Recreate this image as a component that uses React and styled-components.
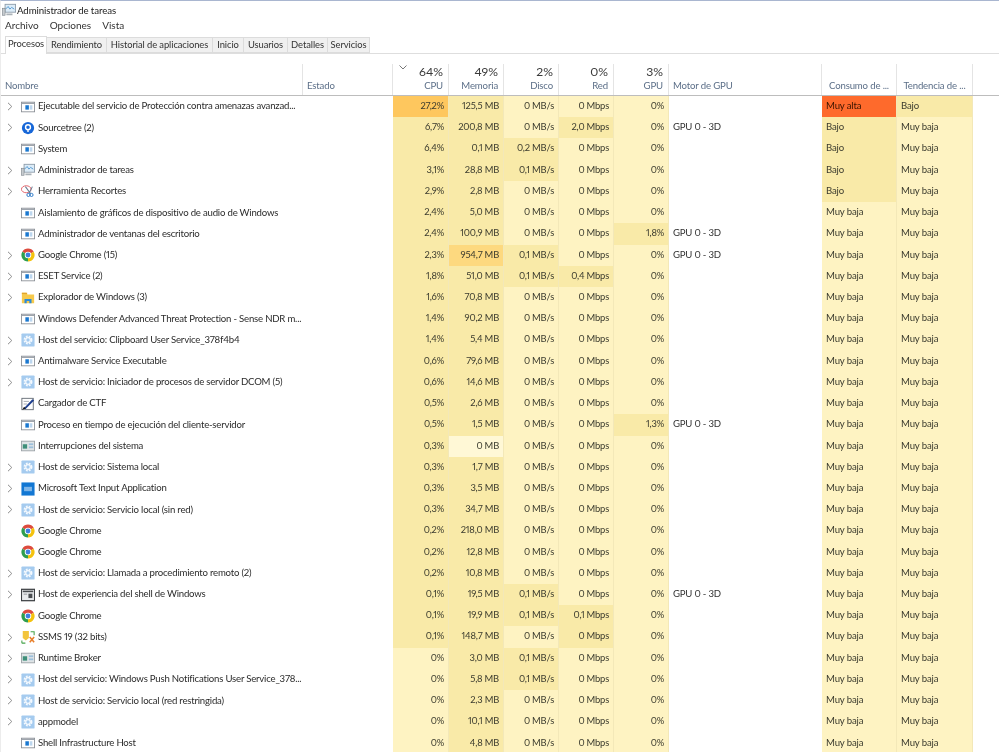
import React from "react";
import styled, { createGlobalStyle } from "styled-components";

const Global = createGlobalStyle`
  html, body { margin: 0; padding: 0; background: #fff; }
  body { width: 999px; height: 752px; overflow: hidden; font-family: Lato, "Liberation Sans", sans-serif; font-variant-numeric: proportional-nums; }
`;

const COLS = "302px 90px 56px 55px 55px 55px 55px 153px 75px 76px";
const LEVELS = {
  0: "#fef3c2",
  1: "#f9eaa8",
  2: "#fdd97f",
  3: "#fec75e",
  f: "#fff8d6",
  o: "#fe6a2c",
};

const Window = styled.div`
  width: 999px;
  height: 752px;
  overflow: hidden;
  box-sizing: border-box;
  border-top: 1px solid #a9b6d0;
  border-left: 1px solid #ececec;
  filter: blur(0.35px);
  color: #2b2b2b;
`;
const TitleBar = styled.div`
  display: flex;
  align-items: center;
  height: 18px;
  padding-left: 1px;
  font-size: 9.7px;
  letter-spacing: -0.1px;
  color: #222;
`;
const TitleIcon = styled.span`
  display: flex;
  width: 15px;
  & svg { margin: 0; }
`;
const MenuBar = styled.div`
  display: flex;
  gap: 11px;
  height: 14px;
  padding-left: 4px;
  font-size: 10px;
  line-height: 13px;
  color: #333;
`;
const TabStrip = styled.div`
  display: flex;
  align-items: flex-end;
  height: 20px;
  padding-left: 4px;
  border-bottom: 1px solid #dedede;
`;
const Tab = styled.div`
  box-sizing: border-box;
  width: ${(p) => p.$w}px;
  height: ${(p) => (p.$active ? 18 : 16)}px;
  margin-bottom: ${(p) => (p.$active ? -1 : 0)}px;
  background: ${(p) => (p.$active ? "#fff" : "#f0f0f0")};
  border: 1px solid #dcdcdc;
  border-bottom: ${(p) => (p.$active ? "none" : "1px solid #dcdcdc")};
  border-left: ${(p) => (p.$first ? "1px solid #dcdcdc" : "none")};
  font-size: 9.4px;
  letter-spacing: -0.08px;
  line-height: 14px;
  text-align: center;
  color: #333;
  white-space: nowrap;
`;
const Head = styled.div`
  display: grid;
  grid-template-columns: ${COLS};
  height: 42px;
  padding-top: 10px;
  box-sizing: border-box;
  border-bottom: 1px solid #bdbdbd;
`;
const HeadCell = styled.div`
  position: relative;
  display: flex;
  flex-direction: column;
  justify-content: flex-end;
  align-items: ${(p) => (p.$right ? "flex-end" : p.$center ? "center" : "flex-start")};
  padding: 0 ${(p) => (p.$right ? 5 : 0)}px 2px ${(p) => (p.$right || p.$center ? 0 : 4)}px;
  border-right: 1px solid #e4e4e4;
  box-sizing: border-box;
`;
const Percent = styled.div`
  font-size: 12.2px;
  line-height: 15px;
  color: #3a3a3a;
`;
const Label = styled.div`
  font-size: 9.6px;
  letter-spacing: -0.15px;
  line-height: 14px;
  color: #5c6f88;
  white-space: nowrap;
`;
const Sort = styled.svg`
  position: absolute;
  left: 6px;
  top: 1px;
  width: 8px;
  height: 5px;
`;
const Body = styled.div`
  display: flex;
  flex-direction: column;
`;
const Row = styled.div`
  display: grid;
  grid-template-columns: ${COLS};
  height: 21.23px;
  font-size: 9.6px;
  letter-spacing: -0.2px;
  line-height: 20.4px;
`;
const NameCell = styled.div`
  display: flex;
  align-items: center;
  overflow: hidden;
  white-space: nowrap;
`;
const Chevron = styled.svg`
  flex: none;
  width: 6px;
  height: 9px;
  margin-left: 6px;
  visibility: ${(p) => (p.$show ? "visible" : "hidden")};
`;
const IconSlot = styled.svg`
  flex: none;
  width: 14px;
  height: 14px;
  margin: 0 3px 0 8px;
`;
const Blank = styled.div``;
const DataCell = styled.div`
  background: ${(p) => LEVELS[p.$level]};
  border-right: 1px solid #f3e8b8;
  padding: 0 ${(p) => (p.$left ? 0 : 4)}px 0 ${(p) => (p.$left ? 4 : 0)}px;
  text-align: ${(p) => (p.$left ? "left" : "right")};
  font-size: ${(p) => (p.$left ? 9.6 : 9.4)}px;
  letter-spacing: ${(p) => (p.$left ? "-0.15px" : "-0.2px")};
  color: ${(p) => (p.$level === "o" ? "#3a1400" : "#3b3b2e")};
  white-space: nowrap;
`;
const EngineCell = styled.div`
  padding-left: 4px;
  color: #333;
`;

const Service = () => (
  <IconSlot viewBox="0 0 16 16">
    <rect x="0.5" y="2.5" width="15" height="11" fill="#fff" stroke="#8a8f96" />
    <rect x="1" y="3" width="14" height="1.5" fill="#9aa0a8" />
    <rect x="5" y="6" width="4" height="5" fill="#1b78d0" />
    <rect x="10" y="6" width="3" height="5" fill="#bcd6ee" />
  </IconSlot>
);
const Sourcetree = () => (
  <IconSlot viewBox="0 0 16 16">
    <circle cx="8" cy="8" r="7" fill="#1767d8" />
    <circle cx="8" cy="7" r="2.8" fill="none" stroke="#fff" strokeWidth="1.6" />
    <path d="M8 10v2.5" stroke="#fff" strokeWidth="1.6" />
  </IconSlot>
);
const TaskMgr = () => (
  <IconSlot viewBox="0 0 16 16">
    <rect x="3.5" y="1.5" width="12" height="9" fill="#dcecf8" stroke="#8b9aa8" />
    <path d="M4 7l3-3 2 3 2-2 3 2" fill="none" stroke="#4a93cf" />
    <rect x="0.5" y="6" width="3" height="8" fill="#c7ccd0" stroke="#7d858c" strokeWidth="0.7" />
    <rect x="5" y="12" width="7" height="2" fill="#aab2b8" />
  </IconSlot>
);
const Snip = () => (
  <IconSlot viewBox="0 0 16 16">
    <ellipse cx="6" cy="6" rx="5.5" ry="4" fill="none" stroke="#e0525a" strokeWidth="1" />
    <path d="M5 3l6 8M13 3l-4 8" stroke="#6b7e92" strokeWidth="1.2" />
    <circle cx="8.5" cy="12.5" r="1.8" fill="none" stroke="#2a78c8" strokeWidth="1.1" />
    <circle cx="12" cy="12.5" r="1.8" fill="none" stroke="#2a78c8" strokeWidth="1.1" />
  </IconSlot>
);
const Chrome = () => (
  <IconSlot viewBox="0 0 16 16">
    <path d="M8 8L1.5 4.25A7.5 7.5 0 0 1 14.5 4.25Z" fill="#dd4b3e" />
    <path d="M8 8L14.5 4.25A7.5 7.5 0 0 1 8 15.5Z" fill="#f4c20d" />
    <path d="M8 8L8 15.5A7.5 7.5 0 0 1 1.5 4.25Z" fill="#2e9e4f" />
    <circle cx="8" cy="8" r="3.7" fill="#fff" />
    <circle cx="8" cy="8" r="2.8" fill="#3f7fe0" />
  </IconSlot>
);
const Folder = () => (
  <IconSlot viewBox="0 0 16 16">
    <path d="M1 2h5l1.5 2H15v10H1z" fill="#f6c94c" />
    <rect x="1" y="2" width="6" height="1.5" fill="#e2a52b" />
    <path d="M4 14V9h8v5h-2.5v-2.5h-3V14z" fill="#2d8bd8" />
  </IconSlot>
);
const Gear = () => (
  <IconSlot viewBox="0 0 16 16">
    <rect x="0.5" y="0.5" width="15" height="15" rx="1" fill="#a5cbef" />
    <circle cx="8" cy="8" r="4" fill="none" stroke="#f4f9fe" strokeWidth="2.2" strokeDasharray="2 1.2" />
    <circle cx="8" cy="8" r="2.6" fill="none" stroke="#f4f9fe" strokeWidth="1.4" />
  </IconSlot>
);
const Ctf = () => (
  <IconSlot viewBox="0 0 16 16">
    <rect x="1" y="1.5" width="13" height="13" fill="#fff" stroke="#5f6770" />
    <path d="M3 13L13 2.5l2 1.5L5 14z" fill="#1d3f8f" />
    <path d="M1.5 14.5L3.5 11l1.8 2z" fill="#111" />
    <path d="M3 5h6M3 8h4" stroke="#9aa0a8" />
  </IconSlot>
);
const Interrupt = () => (
  <IconSlot viewBox="0 0 16 16">
    <rect x="0.5" y="2.5" width="15" height="11" fill="#dfe4e6" stroke="#9aa1a6" />
    <rect x="2" y="6" width="5" height="5" fill="#3f8f7a" />
    <rect x="9" y="5" width="5" height="2" fill="#9cc0dc" />
    <rect x="9" y="8.5" width="5" height="2" fill="#9cc0dc" />
  </IconSlot>
);
const TextInput = () => (
  <IconSlot viewBox="0 0 16 16">
    <rect x="0.5" y="0.5" width="15" height="15" fill="#1277d3" />
    <rect x="3.5" y="5.5" width="9" height="5" fill="#7fb6e8" />
  </IconSlot>
);
const Shell = () => (
  <IconSlot viewBox="0 0 16 16">
    <rect x="0.5" y="1.5" width="15" height="13" fill="#e8eaec" stroke="#3c3f42" strokeWidth="1.4" />
    <rect x="2" y="3" width="12" height="1.8" fill="#4a4d50" />
    <rect x="8.5" y="6.5" width="4.5" height="5" fill="#4a4d50" />
    <rect x="3" y="6.5" width="4" height="1" fill="#8a8d90" />
  </IconSlot>
);
const Ssms = () => (
  <IconSlot viewBox="0 0 16 16">
    <path d="M2 1h7v8l-3.5 3L2 9z" fill="#f3c43c" />
    <path d="M11 2h4v4M1 15v-3M1 15h4" fill="none" stroke="#45a24a" strokeWidth="1.2" />
    <path d="M10 8l5 6M15 8l-5 6" stroke="#e87f2a" strokeWidth="1.8" />
  </IconSlot>
);
const ICONS = { s: Service, t: Sourcetree, m: TaskMgr, r: Snip, c: Chrome, f: Folder, g: Gear, k: Ctf, i: Interrupt, x: TextInput, h: Shell, q: Ssms };

const rows = [
  ["Ejecutable del servicio de Protección contra amenazas avanzad...", 1, "s", "27,2%", 3, "125,5 MB", 1, "0 MB/s", 0, "0 Mbps", 0, "0%", 0, "", "Muy alta", "o", "Bajo", 1],
  ["Sourcetree (2)", 1, "t", "6,7%", 1, "200,8 MB", 1, "0 MB/s", 0, "2,0 Mbps", 1, "0%", 0, "GPU 0 - 3D", "Bajo", 1, "Muy baja", 0],
  ["System", 0, "s", "6,4%", 1, "0,1 MB", 1, "0,2 MB/s", 1, "0 Mbps", 0, "0%", 0, "", "Bajo", 1, "Muy baja", 0],
  ["Administrador de tareas", 1, "m", "3,1%", 1, "28,8 MB", 1, "0,1 MB/s", 1, "0 Mbps", 0, "0%", 0, "", "Bajo", 1, "Muy baja", 0],
  ["Herramienta Recortes", 1, "r", "2,9%", 1, "2,8 MB", 1, "0 MB/s", 0, "0 Mbps", 0, "0%", 0, "", "Bajo", 1, "Muy baja", 0],
  ["Aislamiento de gráficos de dispositivo de audio de Windows", 0, "s", "2,4%", 1, "5,0 MB", 1, "0 MB/s", 0, "0 Mbps", 0, "0%", 0, "", "Muy baja", 0, "Muy baja", 0],
  ["Administrador de ventanas del escritorio", 0, "s", "2,4%", 1, "100,9 MB", 1, "0 MB/s", 0, "0 Mbps", 0, "1,8%", 1, "GPU 0 - 3D", "Muy baja", 0, "Muy baja", 0],
  ["Google Chrome (15)", 1, "c", "2,3%", 1, "954,7 MB", 2, "0,1 MB/s", 1, "0 Mbps", 0, "0%", 0, "GPU 0 - 3D", "Muy baja", 0, "Muy baja", 0],
  ["ESET Service (2)", 1, "s", "1,8%", 1, "51,0 MB", 1, "0,1 MB/s", 1, "0,4 Mbps", 1, "0%", 0, "", "Muy baja", 0, "Muy baja", 0],
  ["Explorador de Windows (3)", 1, "f", "1,6%", 1, "70,8 MB", 1, "0 MB/s", 0, "0 Mbps", 0, "0%", 0, "", "Muy baja", 0, "Muy baja", 0],
  ["Windows Defender Advanced Threat Protection - Sense NDR m...", 0, "s", "1,4%", 1, "90,2 MB", 1, "0 MB/s", 0, "0 Mbps", 0, "0%", 0, "", "Muy baja", 0, "Muy baja", 0],
  ["Host del servicio: Clipboard User Service_378f4b4", 1, "g", "1,4%", 1, "5,4 MB", 1, "0 MB/s", 0, "0 Mbps", 0, "0%", 0, "", "Muy baja", 0, "Muy baja", 0],
  ["Antimalware Service Executable", 1, "s", "0,6%", 1, "79,6 MB", 1, "0 MB/s", 0, "0 Mbps", 0, "0%", 0, "", "Muy baja", 0, "Muy baja", 0],
  ["Host de servicio: Iniciador de procesos de servidor DCOM (5)", 1, "g", "0,6%", 1, "14,6 MB", 1, "0 MB/s", 0, "0 Mbps", 0, "0%", 0, "", "Muy baja", 0, "Muy baja", 0],
  ["Cargador de CTF", 0, "k", "0,5%", 1, "2,6 MB", 1, "0 MB/s", 0, "0 Mbps", 0, "0%", 0, "", "Muy baja", 0, "Muy baja", 0],
  ["Proceso en tiempo de ejecución del cliente-servidor", 0, "s", "0,5%", 1, "1,5 MB", 1, "0 MB/s", 0, "0 Mbps", 0, "1,3%", 1, "GPU 0 - 3D", "Muy baja", 0, "Muy baja", 0],
  ["Interrupciones del sistema", 0, "i", "0,3%", 1, "0 MB", "f", "0 MB/s", 0, "0 Mbps", 0, "0%", 0, "", "Muy baja", 0, "Muy baja", 0],
  ["Host de servicio: Sistema local", 1, "g", "0,3%", 1, "1,7 MB", 1, "0 MB/s", 0, "0 Mbps", 0, "0%", 0, "", "Muy baja", 0, "Muy baja", 0],
  ["Microsoft Text Input Application", 1, "x", "0,3%", 1, "3,5 MB", 1, "0 MB/s", 0, "0 Mbps", 0, "0%", 0, "", "Muy baja", 0, "Muy baja", 0],
  ["Host de servicio: Servicio local (sin red)", 1, "g", "0,3%", 1, "34,7 MB", 1, "0 MB/s", 0, "0 Mbps", 0, "0%", 0, "", "Muy baja", 0, "Muy baja", 0],
  ["Google Chrome", 0, "c", "0,2%", 1, "218,0 MB", 1, "0 MB/s", 0, "0 Mbps", 0, "0%", 0, "", "Muy baja", 0, "Muy baja", 0],
  ["Google Chrome", 0, "c", "0,2%", 1, "12,8 MB", 1, "0 MB/s", 0, "0 Mbps", 0, "0%", 0, "", "Muy baja", 0, "Muy baja", 0],
  ["Host de servicio: Llamada a procedimiento remoto (2)", 1, "g", "0,2%", 1, "10,8 MB", 1, "0 MB/s", 0, "0 Mbps", 0, "0%", 0, "", "Muy baja", 0, "Muy baja", 0],
  ["Host de experiencia del shell de Windows", 1, "h", "0,1%", 1, "19,5 MB", 1, "0,1 MB/s", 1, "0 Mbps", 0, "0%", 0, "GPU 0 - 3D", "Muy baja", 0, "Muy baja", 0],
  ["Google Chrome", 0, "c", "0,1%", 1, "19,9 MB", 1, "0,1 MB/s", 1, "0,1 Mbps", 1, "0%", 0, "", "Muy baja", 0, "Muy baja", 0],
  ["SSMS 19 (32 bits)", 1, "q", "0,1%", 1, "148,7 MB", 1, "0 MB/s", 0, "0 Mbps", 1, "0%", 0, "", "Muy baja", 0, "Muy baja", 0],
  ["Runtime Broker", 1, "i", "0%", 0, "3,0 MB", 1, "0,1 MB/s", 1, "0 Mbps", 0, "0%", 0, "", "Muy baja", 0, "Muy baja", 0],
  ["Host del servicio: Windows Push Notifications User Service_378...", 1, "g", "0%", 0, "5,8 MB", 1, "0,1 MB/s", 1, "0 Mbps", 0, "0%", 0, "", "Muy baja", 0, "Muy baja", 0],
  ["Host de servicio: Servicio local (red restringida)", 1, "g", "0%", 0, "2,3 MB", 1, "0 MB/s", 0, "0 Mbps", 0, "0%", 0, "", "Muy baja", 0, "Muy baja", 0],
  ["appmodel", 1, "g", "0%", 0, "10,1 MB", 1, "0 MB/s", 0, "0 Mbps", 0, "0%", 0, "", "Muy baja", 0, "Muy baja", 0],
  ["Shell Infrastructure Host", 0, "s", "0%", 0, "4,8 MB", 1, "0 MB/s", 0, "0 Mbps", 0, "0%", 0, "", "Muy baja", 0, "Muy baja", 0],
];

const tabs = [["Procesos", 42], ["Rendimiento", 60], ["Historial de aplicaciones", 106], ["Inicio", 31], ["Usuarios", 44], ["Detalles", 40], ["Servicios", 42]];
const metrics = [["64%", "CPU"], ["49%", "Memoria"], ["2%", "Disco"], ["0%", "Red"], ["3%", "GPU"]];

const ProcessRow = ({ r }) => {
  const [name, exp, ic, cpu, cl, mem, ml, disk, dl, net, nl, gpu, gl, engine, power, pl, trend, tl] = r;
  const Icon = ICONS[ic];
  return (
    <Row>
      <NameCell>
        <Chevron $show={!!exp} viewBox="0 0 6 9">
          <path d="M1 0.8L4.8 4.5 1 8.2" fill="none" stroke="#8c8c8c" strokeWidth="1" />
        </Chevron>
        <Icon />
        {name}
      </NameCell>
      <Blank />
      <DataCell $level={cl}>{cpu}</DataCell>
      <DataCell $level={ml}>{mem}</DataCell>
      <DataCell $level={dl}>{disk}</DataCell>
      <DataCell $level={nl}>{net}</DataCell>
      <DataCell $level={gl}>{gpu}</DataCell>
      <EngineCell>{engine}</EngineCell>
      <DataCell $left $level={pl}>{power}</DataCell>
      <DataCell $left $level={tl}>{trend}</DataCell>
    </Row>
  );
};

export default function App() {
  return (
    <>
      <Global />
      <Window>
        <TitleBar>
          <TitleIcon><TaskMgr /></TitleIcon>
          Administrador de tareas
        </TitleBar>
        <MenuBar>
          <span>Archivo</span>
          <span>Opciones</span>
          <span>Vista</span>
        </MenuBar>
        <TabStrip>
          {tabs.map(([t, w], i) => (
            <Tab key={t} $w={w} $active={i === 0} $first={i === 0}>{t}</Tab>
          ))}
        </TabStrip>
        <Head>
          <HeadCell><Label>Nombre</Label></HeadCell>
          <HeadCell><Label>Estado</Label></HeadCell>
          {metrics.map(([p, l], i) => (
            <HeadCell key={l} $right>
              {i === 0 && (
                <Sort viewBox="0 0 8 5">
                  <path d="M0.5 0.5L4 4 7.5 0.5" fill="none" stroke="#777" />
                </Sort>
              )}
              <Percent>{p}</Percent>
              <Label>{l}</Label>
            </HeadCell>
          ))}
          <HeadCell><Label>Motor de GPU</Label></HeadCell>
          <HeadCell $center><Label>Consumo de ...</Label></HeadCell>
          <HeadCell $center><Label>Tendencia de ...</Label></HeadCell>
        </Head>
        <Body>
          {rows.map((r, i) => (
            <ProcessRow key={i} r={r} />
          ))}
        </Body>
      </Window>
    </>
  );
}
